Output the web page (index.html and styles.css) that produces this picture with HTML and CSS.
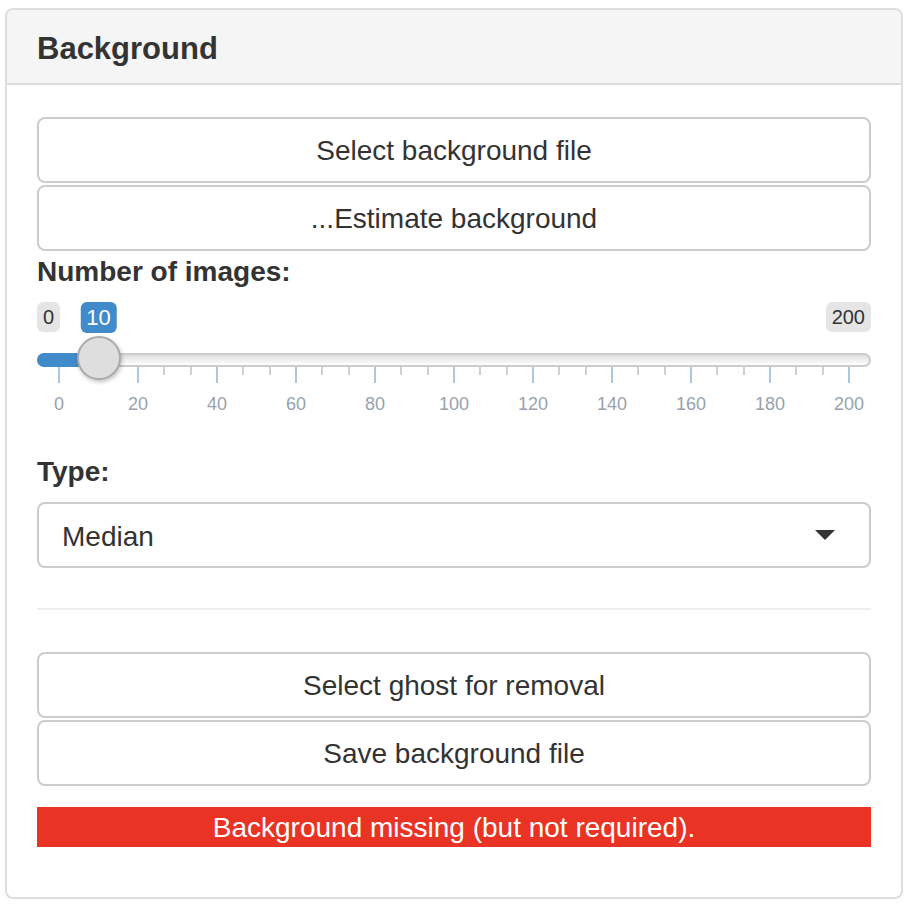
FILE: index.html
```html
<!DOCTYPE html>
<html lang="en">
<head>
    <meta charset="UTF-8">
    <meta name="viewport" content="width=device-width, initial-scale=1.0">
    <title>Background</title>
    <link rel="stylesheet" href="styles.css">
</head>
<body>
    <div class="panel">
        <div class="panel-heading">
            <h3 class="panel-title">Background</h3>
        </div>

        <div class="panel-body">
            <div class="btn-stack">
                <button class="btn">Select background file</button>
                <button class="btn">...Estimate background</button>
            </div>

            <!-- 滑块 -->
            <label class="control-label">Number of images:</label>
            <div class="irs">
                <div class="irs-labels">
                    <span class="irs-min">0</span>
                    <span class="irs-max">200</span>
                </div>
                <span class="irs-single">10</span>
                <div class="irs-line">
                    <span class="irs-bar"></span>
                </div>
                <span class="irs-handle"></span>
                <div class="irs-grid">
                    <div class="irs-ticks">
                        <i class="big"></i><i></i><i></i>
                        <i class="big"></i><i></i><i></i>
                        <i class="big"></i><i></i><i></i>
                        <i class="big"></i><i></i><i></i>
                        <i class="big"></i><i></i><i></i>
                        <i class="big"></i><i></i><i></i>
                        <i class="big"></i><i></i><i></i>
                        <i class="big"></i><i></i><i></i>
                        <i class="big"></i><i></i><i></i>
                        <i class="big"></i><i></i><i></i>
                        <i class="big"></i>
                    </div>
                    <div class="irs-grid-labels">
                        <span>0</span><span>20</span><span>40</span><span>60</span>
                        <span>80</span><span>100</span><span>120</span><span>140</span>
                        <span>160</span><span>180</span><span>200</span>
                    </div>
                </div>
            </div>

            <label class="control-label">Type:</label>
            <div class="select-box">
                <span>Median</span>
                <span class="caret"></span>
            </div>

            <hr>

            <div class="btn-stack">
                <button class="btn">Select ghost for removal</button>
                <button class="btn">Save background file</button>
            </div>

            <div class="alert-missing">Background missing (but not required).</div>
        </div>
    </div>
</body>
</html>
```

FILE: styles.css
```css
/* 全局 */
body {
    margin: 0;
    font-family: "Liberation Sans", Arial, Helvetica, sans-serif;
    color: #333;
    background-color: #fff;
}

.panel {
    margin: 8px 5px;
    border: 2px solid #ddd;
    border-radius: 8px;
}

.panel-heading {
    background-color: #f5f5f5;
    border-bottom: 2px solid #ddd;
    border-radius: 6px 6px 0 0;
    padding: 21px 30px 16px;
}

.panel-title {
    margin: 0;
    font-size: 31px;
    line-height: 36px;
    font-weight: bold;
}

.panel-body {
    padding: 32px 30px 50px;
}

/* 按钮 */
.btn-stack {
    display: flex;
    flex-direction: column;
    gap: 2px;
}

.btn {
    display: block;
    width: 100%;
    height: 66px;
    box-sizing: border-box;
    padding: 2px 0 0;
    border: 2px solid #ccc;
    border-radius: 8px;
    background-color: #fff;
    color: #333;
    font-family: inherit;
    font-size: 28px;
}

.control-label {
    display: block;
    margin: 1px 0 10px;
    font-size: 28px;
    line-height: 40px;
    font-weight: bold;
}

/* 滑块 */
.irs {
    position: relative;
    height: 110px;
    margin-bottom: 40px;
}

.irs-labels {
    display: flex;
    justify-content: space-between;
    height: 30px;
}

.irs-min,
.irs-max {
    font-size: 20px;
    line-height: 26px;
    padding: 2px 6px;
    background-color: rgba(0, 0, 0, 0.1);
    border-radius: 6px;
}

.irs-single {
    position: absolute;
    top: 0;
    left: calc(22px + (100% - 44px) * 0.05);
    transform: translateX(-50%);
    font-size: 22px;
    line-height: 29px;
    padding: 1px 6px;
    background-color: #428bca;
    color: #fff;
    border-radius: 6px;
}

.irs-line {
    position: relative;
    margin-top: 21px;
    height: 14px;
    box-sizing: border-box;
    border: 2px solid #ccc;
    border-radius: 8px;
    background: linear-gradient(#dedede, #fff);
}

.irs-bar {
    position: absolute;
    top: -2px;
    bottom: -2px;
    left: -2px;
    width: calc(22px + (100% - 40px) * 0.05);
    background-color: #428bca;
    border-radius: 8px 0 0 8px;
}

.irs-handle {
    position: absolute;
    top: 34px;
    left: calc((100% - 44px) * 0.05);
    width: 44px;
    height: 44px;
    box-sizing: border-box;
    border: 2px solid #ababab;
    border-radius: 50%;
    background-color: #dedede;
    box-shadow: 1px 2px 4px rgba(0, 0, 0, 0.25);
    z-index: 2;
}

.irs-grid {
    margin: 0 21px;
}

.irs-ticks {
    display: flex;
    justify-content: space-between;
    align-items: flex-start;
    height: 16px;
}

.irs-ticks i {
    width: 2px;
    height: 8px;
    background-color: #cfcfcf;
}

.irs-ticks i.big {
    height: 16px;
    background-color: #a9c6e3;
}

.irs-grid-labels {
    display: flex;
    justify-content: space-between;
    margin-top: 12px;
    font-size: 18px;
    line-height: 18px;
    color: #98a2ac;
}

.irs-grid-labels span {
    width: 2px;
    display: flex;
    justify-content: center;
    white-space: nowrap;
}

/* 下拉框 */
.select-box {
    display: flex;
    align-items: center;
    justify-content: space-between;
    height: 66px;
    box-sizing: border-box;
    padding: 3px 34px 0 23px;
    border: 2px solid #ccc;
    border-radius: 8px;
    font-size: 28px;
}

.caret {
    width: 0;
    height: 0;
    margin-top: -3px;
    border-left: 10px solid transparent;
    border-right: 10px solid transparent;
    border-top: 10px solid #333;
}

hr {
    margin: 40px 0 42px;
    border: 0;
    border-top: 2px solid #eee;
}

.alert-missing {
    margin-top: 21px;
    height: 40px;
    line-height: 42px;
    background-color: #e93324;
    color: #fff;
    font-size: 28px;
    text-align: center;
}
```
